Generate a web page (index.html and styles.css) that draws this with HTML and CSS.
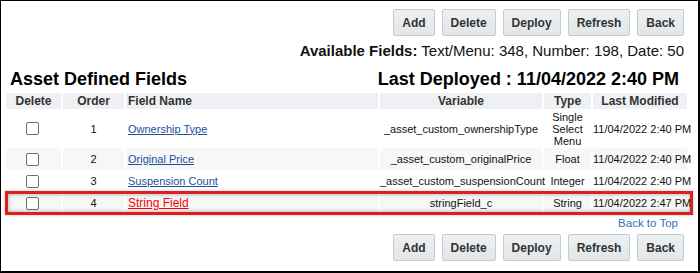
FILE: index.html
```html
<!DOCTYPE html>
<html>
<head>
<meta charset="utf-8">
<link rel="stylesheet" href="styles.css">
</head>
<body>
<div class="frame">
  <div class="toolbar">
    <button class="btn">Add</button>
    <button class="btn">Delete</button>
    <button class="btn">Deploy</button>
    <button class="btn">Refresh</button>
    <button class="btn">Back</button>
  </div>
  <div class="avail"><b>Available Fields:</b> Text/Menu: 348, Number: 198, Date: 50</div>
  <div class="titles">
    <h1 class="title">Asset Defined Fields</h1>
    <h1 class="title deployed">Last Deployed : 11/04/2022 2:40 PM</h1>
  </div>
  <table class="fields">
    <colgroup>
      <col class="c-del"><col class="c-ord"><col class="c-name"><col class="c-var"><col class="c-type"><col class="c-mod">
    </colgroup>
    <thead>
      <tr>
        <th>Delete</th><th>Order</th><th class="left">Field Name</th><th>Variable</th><th>Type</th><th>Last Modified</th>
      </tr>
    </thead>
    <tbody>
      <tr class="tall">
        <td><span class="cb"></span></td><td>1</td><td class="left"><a href="#" class="link">Ownership Type</a></td><td>_asset_custom_ownershipType</td><td class="type">Single Select Menu</td><td>11/04/2022 2:40 PM</td>
      </tr>
      <tr class="alt">
        <td><span class="cb"></span></td><td>2</td><td class="left"><a href="#" class="link">Original Price</a></td><td>_asset_custom_originalPrice</td><td>Float</td><td>11/04/2022 2:40 PM</td>
      </tr>
      <tr>
        <td><span class="cb"></span></td><td>3</td><td class="left"><a href="#" class="link">Suspension Count</a></td><td>_asset_custom_suspensionCount</td><td>Integer</td><td>11/04/2022 2:40 PM</td>
      </tr>
      <tr class="alt">
        <td class="hl-cell"><span class="cb"></span><div class="hl"></div></td><td>4</td><td class="left"><a href="#" class="link new">String Field</a></td><td>stringField_c</td><td>String</td><td>11/04/2022 2:47 PM</td>
      </tr>
    </tbody>
  </table>
  <div class="totop"><a href="#" class="totop-link">Back to Top</a></div>
  <div class="toolbar bottom">
    <button class="btn">Add</button>
    <button class="btn">Delete</button>
    <button class="btn">Deploy</button>
    <button class="btn">Refresh</button>
    <button class="btn">Back</button>
  </div>
</div>
</body>
</html>
```
FILE: styles.css
```css
html, body {
  margin: 0;
  padding: 0;
  background: #fff;
}
body {
  font-family: "Liberation Sans", Arial, sans-serif;
  color: #111;
}
.frame {
  width: 700px;
  height: 273px;
  box-sizing: border-box;
  border-style: solid;
  border-color: #000;
  border-width: 1px 2px 2px 1px;
  overflow: hidden;
}
.toolbar {
  display: flex;
  justify-content: flex-end;
  gap: 7px;
  padding-right: 14px;
  margin-top: 8px;
}
.toolbar.bottom {
  margin-top: 4px;
}
.btn {
  height: 27px;
  padding: 0 8px;
  margin: 0;
  border: 1px solid #c5cacf;
  border-radius: 2px;
  background: linear-gradient(#eef1f3, #e2e6e9);
  font-family: "Liberation Sans", Arial, sans-serif;
  font-size: 12px;
  font-weight: bold;
  color: #333;
}
.avail {
  text-align: right;
  padding-right: 14px;
  margin-top: 6px;
  font-size: 15px;
  line-height: 17px;
  color: #111;
}
.titles {
  display: flex;
  justify-content: space-between;
  align-items: baseline;
  margin-top: 10px;
  padding: 0 19px 0 9px;
}
.title {
  margin: 0;
  font-size: 18px;
  line-height: 21px;
  font-weight: bold;
  color: #000;
}
.fields {
  margin: 3px 0 0 5px;
  width: 681px;
  border-collapse: collapse;
  table-layout: fixed;
  font-size: 11px;
}
.c-del { width: 56px; }
.c-ord { width: 63px; }
.c-name { width: 254px; }
.c-var { width: 164px; }
.c-type { width: 49px; }
.c-mod { width: 95px; }
.fields th {
  background: #eff0f3;
  color: #333;
  font-size: 12px;
  font-weight: bold;
  height: 16px;
  line-height: 16px;
  padding: 0;
  text-align: center;
  border-right: 2px solid #fff;
}
.fields th:last-child,
.fields td:last-child {
  border-right: none;
}
.fields th.left,
.fields td.left {
  text-align: left;
  padding-left: 2px;
}
.fields td {
  height: 22px;
  padding: 0;
  text-align: center;
  white-space: nowrap;
  line-height: 12px;
  border-right: 2px solid #fff;
}
.fields tr.tall td {
  height: 39px;
}
.fields td.type {
  white-space: normal;
  padding: 0 2px;
}
.fields tr.alt td {
  background: #f7f7f7;
}
.cb {
  display: inline-block;
  width: 11px;
  height: 11px;
  border: 1px solid #6f6f6f;
  border-radius: 2px;
  background: #fff;
  vertical-align: middle;
  margin-left: -3px;
}
.link {
  color: #1d4f9c;
  text-decoration: underline;
}
.link.new {
  color: #ff0000;
  font-size: 12px;
}
.hl-cell {
  position: relative;
}
.hl {
  position: absolute;
  left: -1px;
  top: -1px;
  bottom: -1px;
  width: 688px;
  box-sizing: border-box;
  border: 3px solid #dc1f1f;
  box-shadow: inset 0 0 4px rgba(0, 0, 0, 0.35), 0 0 3px rgba(0, 0, 0, 0.25);
  pointer-events: none;
}
.totop {
  text-align: right;
  padding-right: 20px;
  margin-top: 2px;
  font-size: 11.5px;
  line-height: 14px;
}
.totop-link {
  color: #2b72b8;
  text-decoration: none;
}
```
